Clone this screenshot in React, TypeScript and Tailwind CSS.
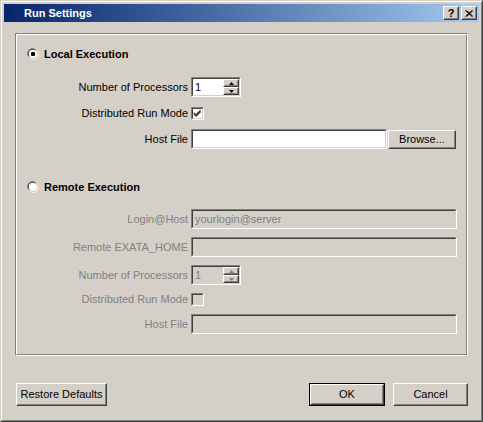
import React from 'react';

const FONT = "font-['Tahoma','Liberation_Sans',sans-serif]";

// 2px sunken well, classic Win2000 look
const Sunken: React.FC<{ className?: string; disabled?: boolean; children?: React.ReactNode }> = ({
  className = '',
  disabled,
  children,
}) => (
  <div className={`border border-t-[#808080] border-l-[#808080] border-r-white border-b-white ${className}`}>
    <div
      className={`w-full h-full border border-t-[#404040] border-l-[#404040] border-r-[#d4d0c8] border-b-[#d4d0c8] flex items-center ${
        disabled ? 'bg-[#d4d0c8]' : 'bg-white'
      }`}
    >
      {children}
    </div>
  </div>
);

const Raised: React.FC<{ className?: string; children?: React.ReactNode }> = ({ className = '', children }) => (
  <div className={`border border-t-white border-l-white border-r-[#404040] border-b-[#404040] bg-[#d4d0c8] ${className}`}>
    <div className="w-full h-full border border-t-[#d4d0c8] border-l-[#d4d0c8] border-r-[#808080] border-b-[#808080] flex items-center justify-center">
      {children}
    </div>
  </div>
);

const Button: React.FC<{ label: string; w: string; h?: string; isDefault?: boolean }> = ({
  label,
  w,
  h = 'h-[23px]',
  isDefault,
}) => {
  const inner = (
    <Raised className="w-full h-full">
      <span className="text-[11px] leading-[13px] text-black">{label}</span>
    </Raised>
  );
  return isDefault ? (
    <div className={`${w} ${h} border border-black`}>{inner}</div>
  ) : (
    <div className={`${w} ${h}`}>{inner}</div>
  );
};

const Radio: React.FC<{ checked?: boolean }> = ({ checked }) => (
  <svg width="12" height="12" viewBox="0 0 12 12">
    <path d="M1.5 8.5 A5 5 0 0 1 8.5 1.5" stroke="#808080" strokeWidth="1" fill="none" />
    <path d="M2.5 8.5 A4.2 4.2 0 0 1 8.5 2.5" stroke="#404040" strokeWidth="1" fill="none" />
    <circle cx="6" cy="6" r="4" fill="white" />
    <path d="M3.5 10.5 A5 5 0 0 0 10.5 3.5" stroke="white" strokeWidth="1" fill="none" />
    <path d="M3.5 9.5 A4.2 4.2 0 0 0 9.5 3.5" stroke="#d4d0c8" strokeWidth="1" fill="none" />
    {checked && <rect x="4" y="4" width="4" height="4" rx="1" fill="black" />}
  </svg>
);

const Check: React.FC<{ checked?: boolean; disabled?: boolean }> = ({ checked, disabled }) => (
  <Sunken className="w-[13px] h-[13px]" disabled={disabled}>
    {checked && (
      <svg width="9" height="9" viewBox="0 0 9 9">
        <path d="M1 3.5 L3 5.5 L7.5 1 M1 4.5 L3 6.5 L7.5 2 M1 5.5 L3 7.5 L7.5 3" stroke="black" strokeWidth="1" fill="none" />
      </svg>
    )}
  </Sunken>
);

const Spinner: React.FC<{ disabled?: boolean }> = ({ disabled }) => (
  <Sunken className="w-[50px] h-[20px]" disabled={disabled}>
    <span className={`flex-1 pl-[2px] text-[11px] leading-[13px] ${disabled ? 'text-[#808080]' : 'text-black'}`}>1</span>
    <div className="flex flex-col w-[16px] h-full">
      <Raised className="flex-1">
        <svg width="5" height="3" viewBox="0 0 5 3">
          <path d="M2.5 0 L5 3 L0 3 Z" fill={disabled ? '#808080' : 'black'} />
        </svg>
      </Raised>
      <Raised className="flex-1">
        <svg width="5" height="3" viewBox="0 0 5 3">
          <path d="M0 0 L5 0 L2.5 3 Z" fill={disabled ? '#808080' : 'black'} />
        </svg>
      </Raised>
    </div>
  </Sunken>
);

const Field: React.FC<{ label: string; disabled?: boolean; mt: string; h: string; children: React.ReactNode }> = ({
  label,
  disabled,
  mt,
  h,
  children,
}) => (
  <div className={`flex items-center ${h} ${mt}`}>
    <div className={`w-[171px] text-right text-[11px] leading-[13px] ${disabled ? 'text-[#808080]' : 'text-black'}`}>
      {label}
    </div>
    <div className="ml-[3px] flex items-center">{children}</div>
  </div>
);

const App: React.FC = () => {
  return (
    <div className={`w-[483px] h-[422px] ${FONT} border border-t-[#d4d0c8] border-l-[#d4d0c8] border-r-[#404040] border-b-[#404040] bg-[#d4d0c8]`}>
      <div className="w-full h-full border border-t-white border-l-white border-r-[#808080] border-b-[#808080] p-[2px] flex flex-col">
        {/* title bar */}
        <div className="h-[18px] shrink-0 flex items-center bg-gradient-to-r from-[#0a246a] to-[#a6caf0] pr-[2px]">
          <span className="ml-[20px] text-[11px] leading-[13px] font-bold text-white">Run Settings</span>
          <div className="ml-auto flex gap-[2px]">
            <Raised className="w-[16px] h-[14px]">
              <span className="text-[11px] font-bold leading-none text-black">?</span>
            </Raised>
            <Raised className="w-[16px] h-[14px]">
              <svg width="8" height="7" viewBox="0 0 8 7">
                <path d="M0.5 0.5 L7 6.5 M1.5 0.5 L8 6.5 M7 0.5 L0.5 6.5 M8 0.5 L1.5 6.5" stroke="black" strokeWidth="1" />
              </svg>
            </Raised>
          </div>
        </div>

        {/* group box */}
        <div className="ml-[11px] mt-[11px] w-[453px] h-[323px] shrink-0 border border-t-[#808080] border-l-[#808080] border-r-white border-b-white">
          <div className="w-full h-full border border-t-white border-l-white border-r-[#808080] border-b-[#808080]">
            <div className="flex items-center mt-[13px] ml-[10px] h-[12px]">
              <Radio checked />
              <span className="ml-[5px] text-[11px] leading-[13px] font-bold text-black">Local Execution</span>
            </div>

            <Field label="Number of Processors" mt="mt-[17px]" h="h-[20px]">
              <Spinner />
            </Field>
            <Field label="Distributed Run Mode" mt="mt-[10px]" h="h-[13px]">
              <Check checked />
            </Field>
            <Field label="Host File" mt="mt-[9px]" h="h-[20px]">
              <Sunken className="w-[196px] h-[20px]" />
              <div className="ml-[1px]">
                <Button label="Browse..." w="w-[68px]" h="h-[19px]" />
              </div>
            </Field>

            <div className="flex items-center mt-[32px] ml-[10px] h-[12px]">
              <Radio />
              <span className="ml-[5px] text-[11px] leading-[13px] font-bold text-black">Remote Execution</span>
            </div>

            <Field label="Login@Host" disabled mt="mt-[16px]" h="h-[20px]">
              <Sunken className="w-[266px] h-[20px]" disabled>
                <span className="pl-[2px] text-[11px] leading-[13px] text-[#808080]">yourlogin@server</span>
              </Sunken>
            </Field>
            <Field label="Remote EXATA_HOME" disabled mt="mt-[8px]" h="h-[20px]">
              <Sunken className="w-[266px] h-[20px]" disabled />
            </Field>
            <Field label="Number of Processors" disabled mt="mt-[8px]" h="h-[20px]">
              <Spinner disabled />
            </Field>
            <Field label="Distributed Run Mode" disabled mt="mt-[8px]" h="h-[13px]">
              <Check disabled />
            </Field>
            <Field label="Host File" disabled mt="mt-[8px]" h="h-[20px]">
              <Sunken className="w-[266px] h-[20px]" disabled />
            </Field>
          </div>
        </div>

        {/* bottom buttons */}
        <div className="flex items-center mt-[27px] ml-[12px] mr-[11px]">
          <Button label="Restore Defaults" w="w-[91px]" />
          <div className="ml-auto flex gap-[8px]">
            <Button label="OK" w="w-[76px]" isDefault />
            <Button label="Cancel" w="w-[75px]" />
          </div>
        </div>
      </div>
    </div>
  );
};

export default App;
